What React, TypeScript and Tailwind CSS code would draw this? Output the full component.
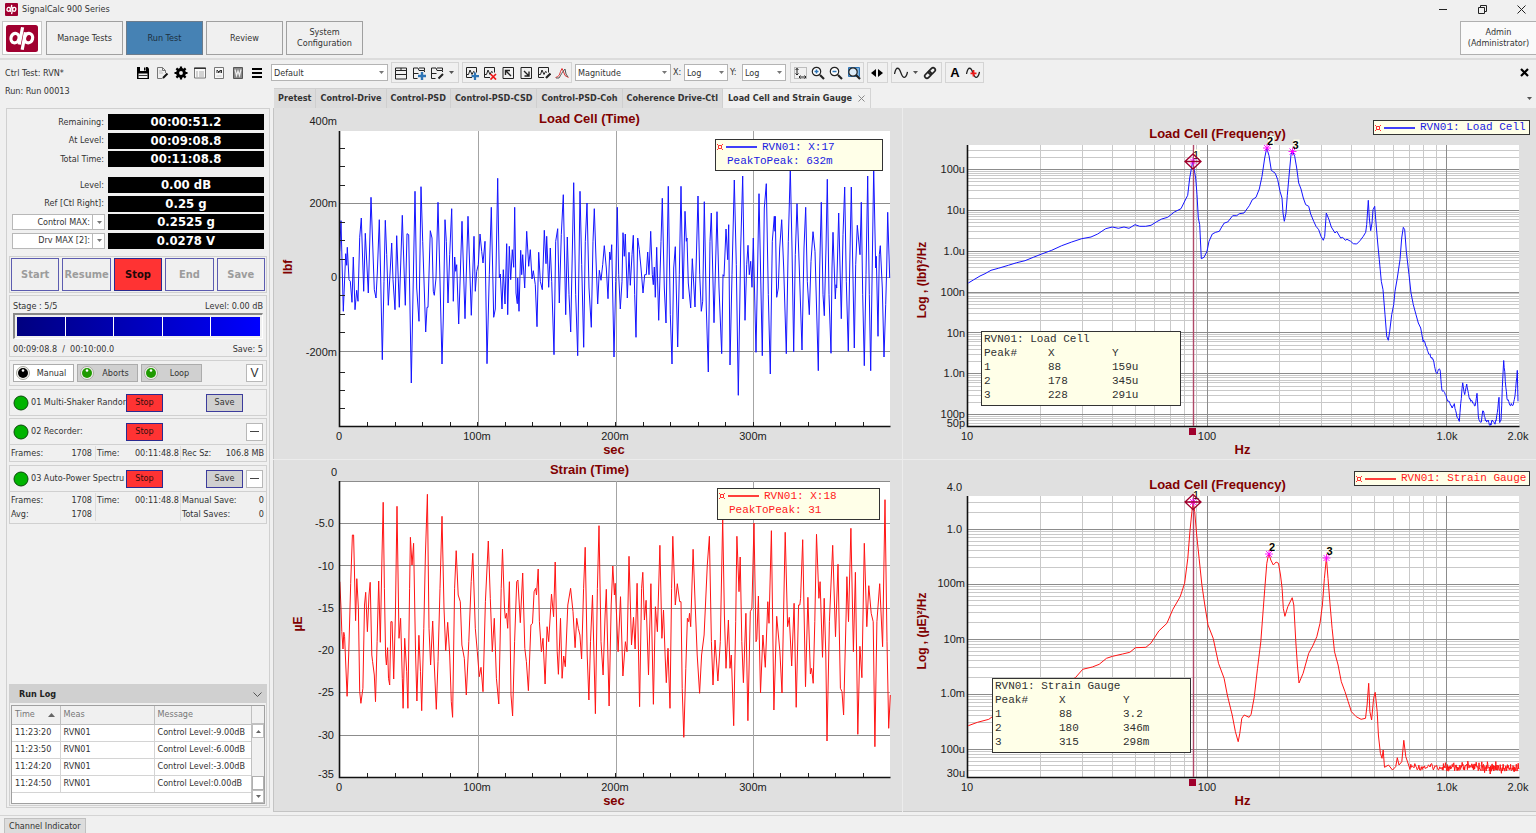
import type { ReactNode } from 'react';

type Pt = [number, number];

const LOAD_TIME_A =
  '209,430 213,338 220,610 227,437 230,472 232,418 237,515 241,520 246,583 250,447 255,605 260,547 264,580 269,388 274,330 281,550 286,376 295,555 303,268 308,408 313,545 318,570 322,495 328,335 332,510 337,755 342,520 346,337 350,440 355,592 365,405 369,515 375,605 380,383 388,598 397,322 402,480 406,592 411,377 416,380 424,825 435,250 440,540 447,640 453,236 458,400 467,672 471,598 474,598 481,368 486,390 490,550 493,562 498,510 504,283 509,480 516,768 520,630 525,335 529,400 534,585 539,440 545,302 550,580 554,447 557,490 560,470 566,648 576,340 585,632 594,325 604,622 612,385 616,550 620,490 625,470 630,378 635,430 639,465 645,400 651,767 658,500 664,298 671,628 676,603 683,211 688,510 691,498 696,603 700,485 705,588 710,407 713,620 718,415 722,515 727,425 731,478 734,298 738,555 742,587 743,510 747,610 752,427 755,500 758,440 764,540 770,370 776,475 781,425 786,513 790,488 796,530 801,656 806,433 811,520 817,545 823,367 828,467 830,385 836,538 841,420 845,520 852,740 857,400 863,362 868,585 874,380 880,260 887,620 892,387 897,560 902,672 911,224 917,560 923,743 930,250 935,470 941,718 946,400 951,285';
const LOAD_TIME_B =
  '12,540 19,658 24,400 28,302 34,480 38,588 43,487 48,517 53,470 58,413 64,480 69,572 74,432 77,455 80,410 84,600 87,747 92,520 97,298 101,500 106,603 111,520 114,374 118,445 121,378 127,570 132,433 136,532 141,440 145,382 149,560 153,688 158,390 163,425 168,480 174,555 179,500 184,500 188,432 192,500 197,370 202,500 205,530 208,477 211,568 215,418 221,637 228,400 232,271 238,540 243,645 250,235 256,620 261,768 266,480 271,416 278,717 283,500 288,235 294,573 300,310 304,400 306,390 310,525 317,600 322,452 330,597 339,264 344,500 349,610 353,580 358,281 364,600 370,792 375,400 379,315 387,644 396,311 402,540 410,737 414,500 417,505 423,363 428,455 431,350 435,771 441,500 448,216 454,470 460,862 467,420 473,204 480,637 485,470 489,412 493,500 497,460 501,538 505,390 513,733 522,257 532,743 538,300 544,227 550,560 556,798 562,400 568,325 570,370 571,325 575,568 580,540 584,420 590,335 596,480 604,737 610,400 616,180 621,420 626,731 631,440 636,287 643,480 651,726 657,420 662,298 667,520 673,620 678,460 684,371 690,430 700,788 704,480 709,283 714,560 718,623 723,420 727,214 732,560 738,736 741,480 744,373 751,573 753,530 755,540 761,315 769,632 774,380 779,237 784,520 790,730 794,480 799,237 808,720 812,470 817,352 825,440 829,283 833,560 838,773 843,500 848,204 853,560 857,788 866,180 872,480 874,445 879,685 883,440 886,413 892,540 897,747 902,590 905,480 908,313 914,510';
const STRAIN_TIME =
  '172,380 175,460 177,530 180,582 182,532 184,545 190,724 194,600 199,385 203,240 206,240 211,497 214,371 218,460 221,710 224,745 229,700 233,450 236,412 240,530 244,420 247,382 251,600 253,620 257,660 260,740 264,560 268,378 272,562 276,300 279,142 282,400 285,600 287,630 290,578 292,670 295,690 298,500 301,500 305,672 309,480 313,154 318,550 322,490 326,670 328,760 332,550 337,650 340,760 344,400 346,247 350,330 354,265 359,600 362,738 367,541 371,650 374,767 379,520 383,300 388,118 392,520 396,630 401,498 405,630 410,763 414,620 419,400 424,184 429,460 433,587 438,502 443,600 447,740 450,787 455,400 459,287 464,420 469,440 473,570 479,610 484,720 490,560 496,380 500,295 506,520 511,590 516,665 520,637 525,710 531,440 538,258 543,430 548,590 553,490 558,670 564,747 570,400 573,282 578,460 580,490 583,475 586,520 590,380 594,720 598,783 603,560 608,380 611,375 617,503 623,354 628,580 632,620 637,707 643,510 647,505 651,410 655,400 657,420 661,342 664,500 669,590 673,550 678,687 683,515 687,560 694,417 699,485 703,321 708,590 711,658 716,490 720,670 724,603 728,635 734,450 741,400 747,470 752,578 756,490 760,520 764,540 768,612 773,400 777,277 782,600 786,735 790,560 795,420 802,776 807,400 811,212 816,560 821,660 826,480 829,403 836,753 841,450 845,333 849,420 851,385 858,590 864,425 870,663 876,560 880,590 885,304 891,570 896,487 900,582 905,385 911,755 916,400 919,352 923,495 927,436 933,660 939,386 945,748 950,455 955,530 961,271 966,550 970,465 974,600 977,683 981,580 986,760 990,400 993,244 999,450 1004,386 1010,440 1013,440 1016,700 1020,847 1025,640 1029,490 1032,500 1034,475 1037,515 1043,283 1048,450 1053,600 1059,715 1064,600 1070,540 1078,330 1083,244 1088,560 1092,690 1097,555 1104,678 1110,560 1116,190 1120,480 1124,640 1130,495 1134,640 1137,600 1143,812 1148,500 1151,244 1156,410 1159,306 1163,560 1167,683 1173,475 1178,797 1184,470 1188,460 1193,204 1198,560 1200,553 1204,423 1209,714 1215,540 1221,637 1227,440 1230,505 1236,227 1242,765 1249,484 1257,590 1262,714 1270,232 1276,515 1280,487 1286,633 1292,445 1297,757 1303,450 1306,450 1308,430 1313,254 1320,695 1326,427 1332,657 1335,640 1339,685 1343,500 1347,238 1353,430 1356,380 1362,607 1366,430 1370,600 1373,858 1379,500 1387,271 1394,545 1400,328 1406,700 1410,710 1414,780 1420,480 1422,365 1426,500 1432,220 1438,590 1443,352 1449,838 1454,574 1459,668 1465,265 1471,515 1476,392 1482,475 1487,500 1491,875 1496,500 1503,386 1510,575 1516,134 1521,560 1525,820 1529,720';
const LOAD_FREQ_A =
  '190,525 205,516 225,504 240,497 258,487 280,481 310,472 335,464 360,458 385,448 410,438 440,427 470,413 500,402 530,392 558,387 578,378 602,362 622,357 640,361 657,357 672,361 690,350 704,355 722,355 738,352 755,341 770,333 788,328 808,312 828,302 838,282 848,262 854,210 863,160 872,210 876,260 880,330 884,350 889,452 897,448 906,430 912,400 922,378 932,373 943,370 950,357 958,345';
const LOAD_FREQ_B =
  '23,342 38,323 50,323 58,317 72,315 88,293 97,275 108,268 118,243 126,205 134,150 140,120 147,143 154,187 166,196 173,215 180,250 186,270 189,315 193,340 198,315 202,262 208,195 213,140 217,128 224,145 230,180 236,225 243,243 250,270 257,290 266,295 272,318 281,340 288,355 296,365 303,385 310,397 314,385 319,315 327,335 334,357 345,375 350,370 362,390 368,388 376,397 381,394 392,400 400,407 410,408 420,398 430,385 437,373 440,350 445,277 448,330 452,368 456,345 459,305 464,295 468,345 473,405 478,455 484,520 489,545 495,620 500,685 505,697 509,670 515,620 521,590 525,550 532,510 540,455 545,390 550,358 554,365 559,430 567,500 573,555 580,590 588,620 595,645 602,660 609,698';
const LOAD_FREQ_TAIL =
  '609,698 614,702 622,728 630,740 640,755 647,790 651,800 655,785 661,790 666,850 674,850 682,875 690,885 697,903 703,890 711,925 718,943 722,890 728,828 734,862 740,830 747,870 754,880 760,885 765,900 771,857 775,920 778,942 784,940 788,905 793,925 800,945 803,932 808,948 813,950 817,940 825,945 830,925 837,872 839,942 843,940 847,840 851,755 856,820 861,870 870,890 878,890 883,875 887,845 892,787 894,880';
const STRAIN_FREQ =
  '157,812 180,802 208,793 217,785 423,668 441,643 465,636 482,628 500,610 515,604 540,597 558,592 572,578 598,577 610,565 630,528 650,505 665,463 683,425 694,385 702,310 707,230 712,170 715,142 719,170 724,240 730,310 737,390 744,450 752,510 765,550 778,625 792,670 800,720 812,780 820,830 827,860 831,835 836,790 842,780 854,787 859,778 867,725 875,640 883,560 888,480 893,400 898,325 903,295 908,315 914,330 921,321 927,325 932,360 936,400 939,460 943,484 950,455 961,428 965,450 970,560 974,630 978,684 988,655 1002,595 1012,573 1022,545 1030,505 1036,450 1041,370 1046,308 1050,370 1055,450 1060,520 1066,590 1075,630 1083,680 1092,710 1100,740 1108,770 1120,785 1132,793 1143,790 1147,750 1151,685 1154,770 1158,795 1163,730 1167,712 1172,770 1175,840 1180,895 1184,910 1187,885 1190,937 1200,930 1210,945 1218,935 1222,908 1226,930 1233,920 1238,856 1243,905 1250,930';

function project(raw: string, ox: number, sx: number, oy: number, sy: number): Pt[] {
  return raw.split(' ').map((p) => {
    const [x, y] = p.split(',').map(Number);
    return [x / sx + ox, y / sy + oy];
  });
}

function noise(i: number) {
  const v = Math.sin(i * 12.9898) * 43758.5453;
  return (v - Math.floor(v)) * 2 - 1;
}

function roughen(points: Pt[], step: number, amount: number): Pt[] {
  const out: Pt[] = [];
  let k = 0;
  for (let i = 0; i < points.length - 1; i++) {
    const [x0, y0] = points[i];
    const [x1, y1] = points[i + 1];
    const n = Math.max(1, Math.round((x1 - x0) / step));
    for (let j = 0; j < n; j++) {
      const t = j / n;
      k += 1;
      const spike = k % 7 === 0 ? 1.7 : 1;
      out.push([x0 + (x1 - x0) * t, y0 + (y1 - y0) * t + noise(k) * amount * spike]);
    }
  }
  out.push(points[points.length - 1]);
  return out;
}

const loadTime = [...project(LOAD_TIME_A, -3, 3, 0, 3), ...project(LOAD_TIME_B, 312, 3, 0, 3)];
const strainTime = project(STRAIN_TIME, -3, 2.465, -4, 3);
const loadFreq = [
  ...project(LOAD_FREQ_A, 2, 3, 0, 3),
  ...project(LOAD_FREQ_B, 317, 3, 0, 3),
  ...roughen(project(LOAD_FREQ_TAIL, 317, 3, 0, 3), 0.6, 1.4),
];
const calmFloor: Pt[] = [[507, 308], [540, 308]];
const noisyFloor: Pt[] = [[540, 308], [616, 309]];
const strainFreq = [
  ...project(STRAIN_FREQ, 2, 2.482, -4, 3),
  ...roughen(calmFloor, 0.8, 3),
  ...roughen(noisyFloor, 0.4, 3.8),
];

/* ---------- charts ---------- */

const snap = (v: number) => Math.floor(v) + 0.5;

function Trace({ points, color }: { points: Pt[]; color: string }) {
  return (
    <polyline
      points={points.map(([x, y]) => `${x.toFixed(1)},${y.toFixed(1)}`).join(' ')}
      fill="none"
      stroke={color}
      strokeWidth={1}
    />
  );
}

type Label = { at: number; text: string; x?: number };

function AxisText({ x, y, anchor, children }: { x: number; y: number; anchor: 'start' | 'middle' | 'end'; children: ReactNode }) {
  return (
    <text x={x} y={y} textAnchor={anchor} fontSize={11} fill="#202020">
      {children}
    </text>
  );
}

function Heading({ x, y, children }: { x: number; y: number; children: ReactNode }) {
  return (
    <text x={x} y={y} textAnchor="middle" fontSize={13} fontWeight={700} fill="#800000">
      {children}
    </text>
  );
}

function SideTitle({ x, y, size = 12, children }: { x: number; y: number; size?: number; children: ReactNode }) {
  return (
    <text transform={`translate(${x} ${y}) rotate(-90)`} textAnchor="middle" fontSize={size} fontWeight={700} fill="#800000">
      {children}
    </text>
  );
}

const svgClass = "block w-full font-['Liberation_Sans',Arial,sans-serif]";

type TimeProps = {
  title: string;
  unit: string;
  unitX: number;
  unitY: number;
  height: number;
  titleY: number;
  top: number;
  lines: number[];
  ticks: number[];
  labels: Label[];
  points: Pt[];
  color: string;
};

function TimeChart(p: TimeProps) {
  const left = 67;
  const right = 617;
  const bottom = 318;
  const xs = Array.from({ length: 19 }, (_, i) => left + (i + 1) * 27.55);
  return (
    <svg viewBox={`0 0 630 ${p.height}`} className={svgClass} role="img" aria-label={p.title}>
      <rect x={left} y={p.top} width={right - left} height={bottom - p.top} fill="#fff" />
      {p.lines.map((y) => (
        <line key={y} x1={left} x2={right} y1={snap(y)} y2={snap(y)} stroke="#8c8c8c" />
      ))}
      {[205, 343, 480].map((x) => (
        <line key={x} x1={x + 0.5} x2={x + 0.5} y1={p.top} y2={bottom} stroke="#a4a4a4" />
      ))}
      <Trace points={p.points} color={p.color} />
      {p.ticks.map((y) => (
        <line key={y} x1={left} x2={left + 5} y1={snap(y)} y2={snap(y)} stroke="#222" />
      ))}
      {xs.map((x) => (
        <line key={x} x1={snap(x)} x2={snap(x)} y1={bottom - 4} y2={bottom} stroke="#222" />
      ))}
      <path d={`M${left - 0.5} ${p.top}V${bottom + 0.5}H${right + 0.5}`} fill="none" stroke="#111" strokeWidth={1.6} />
      <Heading x={316.5} y={p.titleY}>{p.title}</Heading>
      {p.labels.map((l) => (
        <AxisText key={l.text} x={l.x ?? 64} y={l.at + 4} anchor="end">{l.text}</AxisText>
      ))}
      <AxisText x={66} y={332} anchor="middle">0</AxisText>
      <AxisText x={204} y={332} anchor="middle">100m</AxisText>
      <AxisText x={342} y={332} anchor="middle">200m</AxisText>
      <AxisText x={480} y={332} anchor="middle">300m</AxisText>
      <Heading x={341} y={346}>sec</Heading>
      <SideTitle x={p.unitX} y={p.unitY}>{p.unit}</SideTitle>
    </svg>
  );
}

type Peak = { n: number; x: number; y: number };

type FreqProps = {
  title: string;
  unit: string;
  height: number;
  titleY: number;
  first: number;
  decade: number;
  labels: Label[];
  points: Pt[];
  color: string;
  peaks: Peak[];
};

function FreqChart(p: FreqProps) {
  const left = 65;
  const right = 616;
  const top = 37;
  const bottom = 318;
  const minorX: number[] = [];
  for (let d = 0; d < 3; d++) {
    for (let m = 2; m < 10; m++) {
      const x = left + 239.5 * (d + Math.log10(m));
      if (x <= right) minorX.push(x);
    }
  }
  const majorY: number[] = [];
  const minorY: number[] = [];
  for (let d = -1; d < 8; d++) {
    const base = p.first + d * p.decade;
    if (base > top && base < bottom) majorY.push(base);
    for (let m = 2; m < 10; m++) {
      const y = base - p.decade * Math.log10(m);
      if (y > top && y < bottom) minorY.push(y);
    }
  }
  const cursor = p.peaks[0];
  return (
    <svg viewBox={`0 0 633 ${p.height}`} className={svgClass} role="img" aria-label={`${p.title} ${p.unit}`}>
      <rect x={left} y={top} width={right - left} height={bottom - top} fill="#fff" />
      {minorX.map((x) => (
        <line key={x} x1={snap(x)} x2={snap(x)} y1={top} y2={bottom} stroke="#c9c9c9" />
      ))}
      {minorY.map((y) => (
        <line key={y} x1={left} x2={right} y1={snap(y)} y2={snap(y)} stroke="#c9c9c9" />
      ))}
      {majorY.map((y) => (
        <line key={y} x1={left} x2={right} y1={snap(y)} y2={snap(y)} stroke="#8c8c8c" />
      ))}
      {[304.5, 543.5].map((x) => (
        <line key={x} x1={x} x2={x} y1={top} y2={bottom} stroke="#8c8c8c" />
      ))}
      <path d={`M${left - 0.5} ${top}V${bottom + 0.5}H${right + 0.5}`} fill="none" stroke="#111" strokeWidth={1.6} />
      <Heading x={314.5} y={p.titleY}>{p.title}</Heading>
      <Trace points={p.points} color={p.color} />
      <line x1={snap(cursor.x)} x2={snap(cursor.x)} y1={top} y2={bottom} stroke="#b04868" strokeWidth={1.4} />
      <rect x={cursor.x - 4} y={320} width={7} height={7} fill="#a0002c" />
      {p.peaks.map((k) => (
        <g key={k.n}>
          <rect x={k.x + 1} y={k.y - 12} width={6} height={9} fill="#ffffe8" />
          <text x={k.x} y={k.y - 3} fontSize={11} fontWeight={k.n === 1 ? 400 : 700} fill="#000">{k.n}</text>
          <path
            d={`M${k.x - 4} ${k.y}h8M${k.x} ${k.y - 4}v8M${k.x - 3} ${k.y - 3}l6 6M${k.x + 3} ${k.y - 3}l-6 6`}
            stroke="#ff00ff"
            strokeWidth={0.9}
          />
        </g>
      ))}
      <path
        d={`M${cursor.x - 8} ${cursor.y}l8 -7.5l8 7.5l-8 7.5zM${cursor.x - 8} ${cursor.y}h16`}
        fill="none"
        stroke="#a0002c"
        strokeWidth={1.3}
      />
      {p.labels.map((l) => (
        <AxisText key={l.text} x={l.x ?? 62} y={l.at + 4} anchor="end">{l.text}</AxisText>
      ))}
      <AxisText x={64} y={332} anchor="middle">10</AxisText>
      <AxisText x={304} y={332} anchor="middle">100</AxisText>
      <AxisText x={544} y={332} anchor="middle">1.0k</AxisText>
      <AxisText x={615} y={332} anchor="middle">2.0k</AxisText>
      <Heading x={339.5} y={346}>Hz</Heading>
      <SideTitle x={23} y={172}>{p.unit}</SideTitle>
    </svg>
  );
}

function Swatch({ color }: { color: string }) {
  return (
    <svg width="40" height="8" viewBox="0 0 40 8" className="shrink-0" aria-hidden="true">
      <path d="M1.500 2.500h3v3h-3zM0 1l1.500 1.500M6 1L4.500 2.500M0 7l1.500-1.500M6 7L4.500 5.500" stroke="#ff3030" fill="none" />
      <path d="M9 4h31" stroke={color} strokeWidth="1.500" />
    </svg>
  );
}

const mono = "font-['Liberation_Mono','Courier_New',monospace] text-[11px]";

function PeakTable({ title, rows }: { title: string; rows: [string, string, string][] }) {
  return (
    <table className={`${mono} w-full table-fixed text-left leading-[14px] text-[#303030]`}>
      <caption className="h-[14px] text-left whitespace-nowrap">{title}</caption>
      <thead>
        <tr>
          <th className="w-[64px] p-0 font-normal">Peak#</th>
          <th className="w-[64px] p-0 font-normal">X</th>
          <th className="p-0 font-normal">Y</th>
        </tr>
      </thead>
      <tbody>
        {rows.map((r) => (
          <tr key={r[0]}>
            {r.map((c) => (
              <td key={c} className="p-0">{c}</td>
            ))}
          </tr>
        ))}
      </tbody>
    </table>
  );
}

/* ---------- icons ---------- */

function Icon({ children, size = 14 }: { children: ReactNode; size?: number }) {
  return (
    <svg width={size} height={size} viewBox="0 0 14 14" fill="none" stroke="#222" strokeWidth={1} aria-hidden="true">
      {children}
    </svg>
  );
}

function DpMark({ width, height, crop }: { width: number; height: number; crop: number }) {
  return (
    <svg width={width} height={height} viewBox={`0 ${crop} 32 ${32 - 2 * crop}`} aria-hidden="true" className="shrink-0">
      <rect y={crop} width="32" height={32 - 2 * crop} rx="2.500" fill="#a00030" />
      <g fill="none" stroke="#fff" strokeWidth="3.200">
        <ellipse cx="9" cy="15.600" rx="4" ry="4.800" transform="rotate(14 9 15.600)" />
        <path d="M16.600 4.800L13.200 22" />
        <ellipse cx="22.600" cy="15.600" rx="4" ry="4.800" transform="rotate(14 22.600 15.600)" />
        <path d="M19.400 9.800L16.200 27.200" />
      </g>
    </svg>
  );
}

const sideTools: { name: string; icon: ReactNode }[] = [
  {
    name: 'Save test',
    icon: (
      <Icon>
        <path d="M1 1h10.500L13 2.500V13H1z" fill="#000" stroke="none" />
        <path d="M4 1h6v4H4zM2.500 7.500h9V12h-9z" fill="#f0f0f0" stroke="none" />
        <path d="M8 1.500h1.500v3H8zM2.500 9h9v.8h-9z" fill="#000" stroke="none" />
      </Icon>
    ),
  },
  {
    name: 'Edit test',
    icon: (
      <Icon>
        <path d="M2.500 1.500h5l3 3V7M2.500 1.500v11h5M7.500 1.500v3h3" stroke="#777" />
        <path d="M4 5h3M4 7h4" stroke="#bbb" />
        <path d="M12.500 7.500L8 12" stroke="#111" strokeWidth="2" />
      </Icon>
    ),
  },
  {
    name: 'Settings',
    icon: (
      <Icon>
        <circle cx="7" cy="7" r="3.400" stroke="#000" strokeWidth="3" />
        <path d="M7 .5v3M7 10.500v3M.5 7h3M10.500 7h3M2.400 2.400l2 2M9.600 9.600l2 2M11.600 2.400l-2 2M4.400 9.600l-2 2" stroke="#000" strokeWidth="2.200" />
      </Icon>
    ),
  },
  {
    name: 'Window',
    icon: (
      <Icon>
        <path d="M1.500 1.500h11v10.500h-11z" fill="#fafafa" stroke="#777" />
        <path d="M1 2.500h12" stroke="#333" />
        <path d="M3 6h2M6 6h5M3 8h2M6 8h5M3 10h2M6 10h5" stroke="#aaa" />
      </Icon>
    ),
  },
  {
    name: 'Report',
    icon: (
      <Icon>
        <path d="M2.500 1.500h9v11h-9z" fill="#f6f6f6" stroke="#777" />
        <path d="M5 4v3M6.500 5v2M8 4v3M9.500 4v3M5 4l2 2 2-2" stroke="#333" />
        <path d="M4.500 10h5" stroke="#ccc" />
      </Icon>
    ),
  },
  {
    name: 'Word report',
    icon: (
      <Icon>
        <path d="M2.500 1.500h9v11h-9z" fill="#888" stroke="#555" />
        <path d="M4 3.500l1.500 6L7 5l1.500 4.500 1.500-6" stroke="#eee" strokeWidth="1.200" />
      </Icon>
    ),
  },
  {
    name: 'Menu',
    icon: (
      <Icon>
        <path d="M2 3h10M2 7h10M2 11h10" stroke="#000" strokeWidth="2" />
      </Icon>
    ),
  },
];

const folderPath = 'M1.500 4.500v-2.500h11v11h-11zM1.500 4.500h11M1.500 8.500h11M7 2v2.500';
const folderOpen = 'M5.500 12.500h-4v-10.500h4.500l1 2.500h5.500V6M7 2h5.500v2M1.500 7.500h5';

function IconButton({ label, children, className = 'w-[18px]' }: { label: string; children: ReactNode; className?: string }) {
  return (
    <button type="button" aria-label={label} className={`flex h-full shrink-0 items-center justify-center ${className}`}>
      {children}
    </button>
  );
}

function Caret({ color = '#777' }: { color?: string }) {
  return (
    <svg width="5" height="3" viewBox="0 0 5 3" aria-hidden="true" className="shrink-0">
      <path d="M0 0h5L2.500 3z" fill={color} />
    </svg>
  );
}

function ToolGroup({ children, className }: { children: ReactNode; className: string }) {
  return <div className={`flex h-[21px] shrink-0 items-center border border-[#d4d4d4] ${className}`}>{children}</div>;
}

function Combo({ label, options, className }: { label: string; options: string[]; className: string }) {
  return (
    <span className={`relative inline-block shrink-0 ${className}`}>
      <select aria-label={label} className="block h-[17px] w-full appearance-none rounded-none border border-[#b4b4b4] bg-white pl-[2px] leading-[14px] text-[#333]">
        {options.map((o) => (
          <option key={o}>{o}</option>
        ))}
      </select>
      <span className="pointer-events-none absolute inset-y-0 right-[4px] flex items-center">
        <Caret />
      </span>
    </span>
  );
}

const waveBox = 'M7 11.500H1.500V1.500h10V6.500M2 8.500h1.500L5 4l2 4.500 1.500-3 1.500 1';

function Toolbar() {
  return (
    <div className="flex h-[25px] items-center">
      <Combo label="Layout" options={['Default']} className="w-[117px]" />
      <ToolGroup className="ml-[3px] w-[68px]">
        <IconButton label="Panes"><Icon><path d={folderPath} /></Icon></IconButton>
        <IconButton label="Add panes">
          <Icon><path d={folderOpen} /><path d="M10 6v8M6 10h8" stroke="#2e75b6" strokeWidth="2.400" /></Icon>
        </IconButton>
        <IconButton label="Edit panes">
          <Icon><path d={folderOpen} /><path d="M13 8l-4.500 4.500" strokeWidth="2" /></Icon>
        </IconButton>
        <IconButton label="More panes" className="w-[10px]"><Caret color="#555" /></IconButton>
      </ToolGroup>
      <ToolGroup className="ml-[3px] w-[110px]">
        <IconButton label="Add trace">
          <Icon><path d={waveBox} /><path d="M10 6.500v7.500M6.500 10.200h7.500" stroke="#2e75b6" strokeWidth="2.200" /></Icon>
        </IconButton>
        <IconButton label="Delete trace">
          <Icon><path d={waveBox} /><path d="M7.500 8l5.500 5.500M13 8l-5.500 5.500" stroke="#f01818" strokeWidth="1.700" /></Icon>
        </IconButton>
        <IconButton label="Expand">
          <Icon><path d="M2 1.500h10.500v11H2z" /><path d="M10 10L5 5M4.500 9V4.500H9" strokeWidth="1.400" /></Icon>
        </IconButton>
        <IconButton label="Collapse">
          <Icon><path d="M2 1.500h10.500v11H2z" /><path d="M5 5l5 5M10 5.500V10H5.500" strokeWidth="1.400" /></Icon>
        </IconButton>
        <IconButton label="Edit trace">
          <Icon><path d={waveBox} /><path d="M13.500 7.500l-4.500 4.500" strokeWidth="2.200" /></Icon>
        </IconButton>
        <IconButton label="Overlay traces">
          <Icon><path d="M.5 11.500c3-1 4-2 5-6l1.500-3 1 2 2 5 3.500 2" stroke="#e03030" /><path d="M1 12h3c2-3 3-6 6-9l1 5 2 3" stroke="#555" /></Icon>
        </IconButton>
      </ToolGroup>
      <Combo label="Format" options={['Magnitude']} className="ml-[3px] w-[96px]" />
      <label className="ml-[2px] flex items-center">
        <span className="w-[11px]">X:</span>
        <Combo label="X scale" options={['Log', 'Linear']} className="w-[44px]" />
      </label>
      <label className="ml-[2px] flex items-center">
        <span className="w-[12px]">Y:</span>
        <Combo label="Y scale" options={['Log', 'Linear']} className="w-[44px]" />
      </label>
      <ToolGroup className="ml-[4px] w-[74px]">
        <IconButton label="Axis limits">
          <Icon><path d="M1.500 1.500h12v11h-12z" stroke="#888" strokeDasharray="1 1" /><path d="M4 2v7M2.500 4L4 2.500 5.500 4M2.500 7.500L4 9l1.500-1.500M6 11h7M7.500 9.500L6 11l1.500 1.500M11.500 9.500L13 11l-1.500 1.500" /></Icon>
        </IconButton>
        {['M3.500 5.500h4M5.500 3.500v4', 'M3.500 5.500h4'].map((d, i) => (
          <IconButton key={d} label={i ? 'Zoom out' : 'Zoom in'}>
            <Icon><circle cx="5.500" cy="5.500" r="4.200" strokeWidth="1.200" fill="#fff" /><path d="M9 9l4 4" strokeWidth="2.200" /><path d={d} stroke="#2e75b6" strokeWidth="1.500" /></Icon>
          </IconButton>
        ))}
        <IconButton label="Zoom to fit">
          <Icon><path d="M1.500 1.500h11v9h-11z" fill="#7fb2de" stroke="#2e75b6" /><circle cx="6" cy="6" r="4.200" strokeWidth="1.200" fill="#dcebf7" /><path d="M9 9l4 4" strokeWidth="2.200" /></Icon>
        </IconButton>
      </ToolGroup>
      <ToolGroup className="ml-[3px] w-[21px]">
        <IconButton label="Cursor">
          <Icon><path d="M6 3v8L1 7zM8 3v8l5-4z" fill="#000" stroke="none" /></Icon>
        </IconButton>
      </ToolGroup>
      <ToolGroup className="ml-[3px] w-[51px]">
        <IconButton label="Wave"><Icon><path d="M.5 8C2 0 5 1 7 7s5 6 6.500-1" strokeWidth="1.300" /></Icon></IconButton>
        <IconButton label="More waves" className="w-[11px]"><Caret color="#555" /></IconButton>
        <IconButton label="Link">
          <Icon><g transform="rotate(-45 7 7)" strokeWidth="1.700"><rect x="0.500" y="4.800" width="7.500" height="4.400" rx="2.200" /><rect x="6" y="4.800" width="7.500" height="4.400" rx="2.200" /></g></Icon>
        </IconButton>
      </ToolGroup>
      <ToolGroup className="ml-[3px] w-[39px]">
        <IconButton label="Annotate">
          <span className="font-['Liberation_Sans',Arial,sans-serif] text-[13px] leading-[14px] font-bold text-black">A</span>
        </IconButton>
        <IconButton label="Mark trace">
          <Icon><path d="M.5 8C2 0 5 1 7 7s5 6 6.500-1" strokeWidth="1.300" /><path d="M7.500 4v6.500M4.500 7.300h6" stroke="#f01818" strokeWidth="1.800" /></Icon>
        </IconButton>
      </ToolGroup>
      <button type="button" aria-label="Close panel" className="mr-[7px] ml-auto">
        <svg width="9" height="9" viewBox="0 0 9 9" aria-hidden="true">
          <path d="M1 1l7 7M8 1L1 8" stroke="#000" strokeWidth="2.200" />
        </svg>
      </button>
    </div>
  );
}

/* ---------- side panel ---------- */

function Readout({ label, value }: { label: ReactNode; value: string }) {
  return (
    <div className="flex h-[16px] items-center">
      <div className="w-[97px] shrink-0 pr-[4px] text-right">{label}</div>
      <output className="h-[16px] flex-1 bg-black text-center text-[13px] leading-[16px] font-bold text-white">{value}</output>
    </div>
  );
}

function PickLabel({ text }: { text: string }) {
  return (
    <span className="relative -mr-[1px] ml-[1px] block">
      <select aria-label={text} className="block h-[16px] w-full appearance-none rounded-none border border-[#b8b8b8] bg-white pr-[14px] text-right leading-[13px] text-[#333] [text-align-last:right]">
        <option>{text}</option>
      </select>
      <span className="pointer-events-none absolute inset-y-0 right-0 flex w-[13px] items-center justify-center border-l border-[#b8b8b8]">
        <Caret />
      </span>
    </span>
  );
}

function Box({ children, className = '' }: { children: ReactNode; className?: string }) {
  return <section className={`border border-[#d0d0d0] ${className}`}>{children}</section>;
}

function Lamp({ color }: { color: string }) {
  return (
    <svg width="14" height="14" viewBox="0 0 14 14" aria-hidden="true" className="shrink-0">
      <circle cx="7" cy="7" r="6.500" fill="#f4f4f0" stroke="#a8a8a0" />
      <circle cx="7" cy="7" r="5" fill={color} />
      <circle cx="7" cy="4.500" r="1.300" fill="#fff" />
    </svg>
  );
}

function ModeButton({ text, lamp, on }: { text: string; lamp: string; on?: boolean }) {
  return (
    <button
      type="button"
      aria-pressed={!!on}
      className={`flex h-[18px] w-[61px] items-center border border-[#acacac] pl-[2px] ${on ? 'bg-white' : 'bg-[#d0d0d0]'}`}
    >
      <Lamp color={lamp} />
      <span className="flex-1 text-center">{text}</span>
    </button>
  );
}

function MeasHead({ name, save, fold }: { name: string; save?: boolean; fold?: boolean }) {
  return (
    <div className="flex h-[25px] items-center pr-[3px] pl-[3px]">
      <svg width="16" height="16" viewBox="0 0 16 16" aria-hidden="true" className="shrink-0">
        <circle cx="8" cy="8" r="7" fill="#00b400" stroke="#0a4a0a" />
      </svg>
      <span className="ml-[2px] w-[95px] shrink-0 whitespace-nowrap">{name}</span>
      <button type="button" className="h-[18px] w-[37px] shrink-0 border border-[#2a2a90] bg-[#ff3333] text-[#301010]">Stop</button>
      {save && (
        <button type="button" className="ml-[43px] h-[18px] w-[37px] shrink-0 border border-[#3c3c9c] bg-[#d0d0d0]">Save</button>
      )}
      {fold && (
        <button type="button" aria-label={`Collapse ${name}`} className="ml-auto flex h-[18px] w-[17px] items-center justify-center border border-[#b8b8b8] bg-white">
          <span className="h-px w-[9px] bg-[#444]" />
        </button>
      )}
    </div>
  );
}

function Stat({ name, value, className }: { name: string; value: string; className: string }) {
  return (
    <div className={`flex justify-between whitespace-nowrap ${className}`}>
      <span>{name}</span>
      <span>{value}</span>
    </div>
  );
}

const log: [string, string, string][] = [
  ['11:23:20', 'RVN01', 'Control Level:-9.00dB'],
  ['11:23:50', 'RVN01', 'Control Level:-6.00dB'],
  ['11:24:20', 'RVN01', 'Control Level:-3.00dB'],
  ['11:24:50', 'RVN01', 'Control Level:0.00dB'],
];

function RunLog() {
  return (
    <Box className="mt-auto bg-[#f0f0f0]">
      <button type="button" className="flex h-[18px] w-full items-center justify-between bg-[#d0d0d0] pr-[4px] pl-[9px] font-bold text-[#222]">
        Run Log
        <svg width="9" height="5" viewBox="0 0 9 5" fill="none" aria-hidden="true">
          <path d="M.5 .5l4 4 4-4" stroke="#555" />
        </svg>
      </button>
      <div className="m-px mt-[2px] flex h-[99px] border border-[#a0a0a0] bg-white">
        <table className="h-fit flex-1 table-fixed border-collapse text-left">
          <thead>
            <tr className="h-[18px] bg-[#f0f0f0] text-[#777]">
              <th className="w-[48px] border-r border-b border-[#c0c0c0] p-0 pl-[3px] font-normal">
                <span className="flex items-center justify-between pr-[5px]">
                  Time
                  <svg width="7" height="4" viewBox="0 0 7 4" aria-hidden="true"><path d="M0 4h7L3.500 0z" fill="#666" /></svg>
                </span>
              </th>
              <th className="w-[94px] border-r border-b border-[#c0c0c0] p-0 pl-[3px] font-normal">Meas</th>
              <th className="border-b border-[#c0c0c0] p-0 pl-[3px] font-normal">Message</th>
            </tr>
          </thead>
          <tbody>
            {log.map((r) => (
              <tr key={r[0]} className="h-[17px]">
                <td className="border-r border-b border-[#d4d4d4] p-0 pl-[3px]">{r[0]}</td>
                <td className="border-r border-b border-[#d4d4d4] p-0 pl-[3px]">{r[1]}</td>
                <td className="border-b border-[#d4d4d4] p-0 pl-[3px] whitespace-nowrap">{r[2]}</td>
              </tr>
            ))}
          </tbody>
        </table>
        <div className="flex w-[13px] shrink-0 flex-col border-l border-[#c0c0c0] bg-[#f0f0f0]">
          <div className="h-[18px] border-b border-[#c0c0c0]" />
          <button type="button" aria-label="Scroll up" className="flex h-[14px] items-center justify-center border border-[#c0c0c0] bg-white">
            <svg width="5" height="3" viewBox="0 0 5 3" aria-hidden="true"><path d="M0 3h5L2.500 0z" fill="#666" /></svg>
          </button>
          <div className="mt-auto h-[14px] border border-[#b0b0b0] bg-white" />
          <button type="button" aria-label="Scroll down" className="flex h-[13px] items-center justify-center border border-[#c0c0c0] bg-white">
            <Caret color="#666" />
          </button>
        </div>
      </div>
    </Box>
  );
}

function SidePanel() {
  return (
    <aside className="flex w-[271px] shrink-0 flex-col">
      <header className="flex h-[48px] justify-between pr-[5px] pl-[5px]">
        <div className="pt-[4px] leading-[18px]">
          <p>Ctrl Test: RVN*</p>
          <p>Run: Run 00013</p>
        </div>
        <div className="flex h-[26px] gap-[1px]">
          {sideTools.map((t) => (
            <IconButton key={t.name} label={t.name}>{t.icon}</IconButton>
          ))}
        </div>
      </header>
      <div className="mr-px mb-[4px] ml-[6px] flex flex-1 flex-col border border-[#d0d0d0] px-[2px] pb-[1px]">
        <div className="mt-[5px] mr-[3px] ml-[2px] flex h-[53px] flex-col justify-between">
          <Readout label="Remaining:" value="00:00:51.2" />
          <Readout label="At Level:" value="00:09:08.8" />
          <Readout label="Total Time:" value="00:11:08.8" />
        </div>
        <div className="mt-[10px] mr-[3px] ml-[2px] flex h-[72px] flex-col justify-between">
          <Readout label="Level:" value="0.00 dB" />
          <Readout label="Ref [Ctl Right]:" value="0.25 g" />
          <Readout label={<PickLabel text="Control MAX:" />} value="0.2525 g" />
          <Readout label={<PickLabel text="Drv MAX [2]:" />} value="0.0278 V" />
        </div>

        <Box className="mt-[7px] grid grid-cols-5 gap-[3px] p-px">
          {['Start', 'Resume', 'Stop', 'End', 'Save'].map((b) => (
            <button
              key={b}
              type="button"
              className={`h-[33px] border text-[11px] font-bold ${
                b === 'Stop' ? 'border-[#2a2a90] bg-[#ff3333] text-[#200808]' : 'border-[#5c5cb0] bg-[#f0f0f0] text-[#9c9c9c]'
              }`}
            >
              {b}
            </button>
          ))}
        </Box>

        <Box className="mt-[2px] h-[62px] px-[3px]">
          <div className="flex h-[17px] items-end justify-between">
            <span>Stage : 5/5</span>
            <span>Level: 0.00 dB</span>
          </div>
          <div className="h-[26px] border-t-2 border-r border-b border-l-2 border-t-[#888] border-r-white border-b-white border-l-[#888] p-[2px]">
            <div role="progressbar" aria-label="Stage" aria-valuenow={5} aria-valuemax={5} className="grid h-[19px] grid-cols-5 divide-x divide-white bg-linear-to-r from-[#000080] to-[#0000ff]">
              <span />
              <span />
              <span />
              <span />
              <span />
            </div>
          </div>
          <div className="flex h-[17px] items-end justify-between">
            <span>00:09:08.8&nbsp; /&nbsp; 00:10:00.0</span>
            <span>Save: 5</span>
          </div>
        </Box>

        <Box className="mt-[3px] flex h-[26px] items-center gap-[3px] px-[3px]">
          <ModeButton text="Manual" lamp="#000" on />
          <ModeButton text="Aborts" lamp="#1f9a00" />
          <ModeButton text="Loop" lamp="#1f9a00" />
          <button type="button" className="ml-auto h-[18px] w-[17px] border border-[#b8b8b8] bg-white font-['Liberation_Sans',Arial,sans-serif] text-[12px] leading-[16px]">V</button>
        </Box>

        <Box className="mt-[3px]">
          <MeasHead name="01 Multi-Shaker Randor" save />
        </Box>

        <Box className="mt-[2px] h-[44px]">
          <MeasHead name="02 Recorder:" fold />
          <div className="flex h-[17px] items-center border-t border-[#d0d0d0] leading-[14px]">
            <Stat name="Frames:" value="1708" className="w-[82px] pl-px" />
            <Stat name="Time:" value="00:11:48.8" className="ml-[3px] w-[84px] border-l border-[#dcdcdc] pl-px" />
            <Stat name="Rec Sz:" value="106.8 MB" className="ml-[1px] flex-1 border-l border-[#dcdcdc] pr-[2px] pl-px" />
          </div>
        </Box>

        <Box className="mt-[3px] h-[59px]">
          <MeasHead name="03 Auto-Power Spectru" save fold />
          <div className="flex border-t border-[#d0d0d0] pt-[1px] leading-[14px]">
            <div className="w-[82px] pl-px">
              <Stat name="Frames:" value="1708" className="" />
              <Stat name="Avg:" value="1708" className="" />
            </div>
            <Stat name="Time:" value="00:11:48.8" className="ml-[3px] w-[84px] border-l border-[#dcdcdc] pl-px" />
            <div className="ml-[1px] flex-1 border-l border-[#dcdcdc] pr-[2px] pl-px">
              <Stat name="Manual Save:" value="0" className="" />
              <Stat name="Total Saves:" value="0" className="" />
            </div>
          </div>
        </Box>

        <RunLog />
      </div>
    </aside>
  );
}

/* ---------- page ---------- */

const nav = ['Manage Tests', 'Run Test', 'Review', 'System Configuration'];
const tabs = ['Pretest', 'Control-Drive', 'Control-PSD', 'Control-PSD-CSD', 'Control-PSD-Coh', 'Coherence Drive-Ctl'];
const legendBox = `${mono} absolute border border-[#333] bg-[#ffffe8]`;

export default function App() {
  return (
    <div className="flex min-h-screen flex-col bg-[#f0f0f0] font-['DejaVu_Sans_Condensed',Tahoma,sans-serif] text-[9px] leading-[13px] text-[#333]">
      <header>
        <div className="flex h-[18px] items-center pl-[5px]">
          <DpMark width={13} height={13} crop={0} />
          <h1 className="ml-[4px] text-[9px]">SignalCalc 900 Series</h1>
          <div className="ml-auto flex items-center gap-[30px] pr-[10px]">
            <button type="button" aria-label="Minimize">
              <svg width="9" height="9" viewBox="0 0 9 9" aria-hidden="true"><path d="M0 4.500h8" stroke="#222" /></svg>
            </button>
            <button type="button" aria-label="Restore">
              <svg width="9" height="9" viewBox="0 0 9 9" fill="none" stroke="#222" aria-hidden="true"><path d="M.5 2.500h6v6h-6zM2.500 2.500v-2h6v6h-2" /></svg>
            </button>
            <button type="button" aria-label="Close">
              <svg width="9" height="9" viewBox="0 0 9 9" stroke="#222" aria-hidden="true"><path d="M.5 .5l8 8M8.500 .5l-8 8" /></svg>
            </button>
          </div>
        </div>
        <nav className="flex h-[42px] gap-[3px] border-b-2 border-[#dcdcdc] pt-[3px] pl-[2px]">
          <a href="#home" aria-label="Home" className="mr-px flex h-[34px] w-[40px] items-center justify-center border border-[#c8c8c8] bg-white">
            <DpMark width={32} height={27} crop={2.5} />
          </a>
          {nav.map((n) => (
            <button
              key={n}
              type="button"
              className={`h-[34px] w-[77px] border px-[8px] leading-[11px] ${
                n === 'Run Test' ? 'border-[#6c7c8c] bg-[#4682b4] text-[#1c3040]' : 'border-[#a0a0a0] bg-[#f0f0f0]'
              }`}
            >
              {n}
            </button>
          ))}
          <button type="button" className="ml-auto h-[34px] w-[76px] border border-r-0 border-[#b0b0b0] bg-[#fafafa] leading-[11px]">
            Admin
            <br />
            (Administrator)
          </button>
        </nav>
      </header>

      <div className="flex flex-1">
        <SidePanel />
        <main className="flex min-w-0 flex-1 flex-col">
          <Toolbar />
          <div role="tablist" className="mt-[3px] flex h-[20px] items-stretch pl-[3px]">
            {tabs.map((t) => (
              <button key={t} type="button" role="tab" aria-selected={false} className="border-t border-r border-[#cfcfcf] bg-[#dcdcdc] px-[4px] font-bold whitespace-nowrap">
                {t}
              </button>
            ))}
            <button type="button" role="tab" aria-selected className="flex items-center gap-[6px] border-t border-r border-[#d4d4d4] px-[5px] font-bold whitespace-nowrap">
              Load Cell and Strain Gauge
              <svg width="7" height="7" viewBox="0 0 7 7" stroke="#888" aria-hidden="true"><path d="M.5 .5l6 6M6.500 .5l-6 6" /></svg>
            </button>
            <button type="button" aria-label="All tabs" className="mr-[4px] ml-auto"><Caret color="#555" /></button>
          </div>

          <div className="ml-[2px] grid grid-cols-[630fr_633fr] bg-[#e0e0e0] shadow-[inset_1px_-1px_0_#c4c4c4]">
            <div className="relative border-r border-[#ececec] [&>svg]:-mr-px [&>svg]:w-[calc(100%+1px)]">
              <TimeChart
                title="Load Cell (Time)"
                unit="lbf"
                unitX={19}
                unitY={159}
                height={351}
                titleY={15}
                top={23}
                lines={[95, 169, 243]}
                ticks={[40, 58, 77, 114, 132, 151, 187, 206, 224, 264, 282, 300]}
                labels={[
                  { at: 13, text: '400m' },
                  { at: 95, text: '200m' },
                  { at: 169, text: '0' },
                  { at: 244, text: '-200m' },
                ]}
                points={loadTime}
                color="#1414ff"
              />
              <div className={`${legendBox} top-[31px] right-[19px] h-[32px] w-[168px] pl-[1px] leading-[14px] text-[#2020e0]`}>
                <div className="flex items-center gap-[5px]">
                  <Swatch color="#0000ff" />
                  <span>RVN01: X:17</span>
                </div>
                <div className="pl-[10px]">PeakToPeak: 632m</div>
              </div>
            </div>

            <div className="relative">
              <FreqChart
                title="Load Cell (Frequency)"
                unit="Log , (lbf)²/Hz"
                height={351}
                titleY={30}
                first={61.5}
                decade={40.85}
                labels={[
                  { at: 61, text: '100u' },
                  { at: 102, text: '10u' },
                  { at: 143, text: '1.0u' },
                  { at: 184, text: '100n' },
                  { at: 225, text: '10n' },
                  { at: 265, text: '1.0n' },
                  { at: 306, text: '100p' },
                  { at: 315, text: '50p' },
                ]}
                points={loadFreq}
                color="#1414ff"
                peaks={[
                  { n: 1, x: 290, y: 53.5 },
                  { n: 2, x: 364, y: 40 },
                  { n: 3, x: 389.5, y: 43.5 },
                ]}
              />
              <div className={`${legendBox} top-[12px] right-[6px] flex h-[15px] w-[157px] items-center gap-[5px] pl-[1px] leading-[13px] whitespace-nowrap text-[#2020e0]`}>
                <Swatch color="#0000ff" />
                <span>RVN01: Load Cell</span>
              </div>
              <div className={`${legendBox} top-[223px] left-[78px] h-[75px] w-[200px] pl-[2px]`}>
                <PeakTable title="RVN01: Load Cell" rows={[['1', '88', '159u'], ['2', '178', '345u'], ['3', '228', '291u']]} />
              </div>
            </div>

            <div className="relative border-t border-r border-[#ececec] [&>svg]:-mt-px [&>svg]:-mr-px [&>svg]:w-[calc(100%+1px)]">
              <TimeChart
                title="Strain (Time)"
                unit="µE"
                unitX={29}
                unitY={165}
                height={353}
                titleY={15}
                top={22}
                lines={[22, 64, 106, 149, 191, 233, 276]}
                ticks={[]}
                labels={[
                  { at: 13, text: '0' },
                  { at: 64, text: '-5.0', x: 61 },
                  { at: 107, text: '-10', x: 61 },
                  { at: 149, text: '-15', x: 61 },
                  { at: 191, text: '-20', x: 61 },
                  { at: 233, text: '-25', x: 61 },
                  { at: 276, text: '-30', x: 61 },
                  { at: 315, text: '-35', x: 61 },
                ]}
                points={strainTime}
                color="#ff1414"
              />
              <div className={`${legendBox} top-[28px] right-[22px] h-[32px] w-[163px] pl-[1px] leading-[14px] text-[#ff2020]`}>
                <div className="flex items-center gap-[5px]">
                  <Swatch color="#ff0000" />
                  <span>RVN01: X:18</span>
                </div>
                <div className="pl-[10px]">PeakToPeak: 31</div>
              </div>
            </div>

            <div className="relative border-t border-[#ececec] [&>svg]:-mt-px">
              <FreqChart
                title="Load Cell (Frequency)"
                unit="Log , (µE)²/Hz"
                height={353}
                titleY={30}
                first={70}
                decade={55}
                labels={[
                  { at: 28, text: '4.0', x: 59 },
                  { at: 70, text: '1.0', x: 59 },
                  { at: 124, text: '100m' },
                  { at: 180, text: '10m' },
                  { at: 234, text: '1.0m' },
                  { at: 290, text: '100u' },
                  { at: 314, text: '30u' },
                ]}
                points={strainFreq}
                color="#ff1414"
                peaks={[
                  { n: 1, x: 290, y: 43 },
                  { n: 2, x: 366, y: 95 },
                  { n: 3, x: 423.5, y: 99 },
                ]}
              />
              <div className={`${legendBox} top-[11px] right-[6px] flex h-[15px] w-[176px] items-center gap-[5px] pl-[1px] leading-[13px] whitespace-nowrap text-[#ff2020]`}>
                <Swatch color="#ff0000" />
                <span>RVN01: Strain Gauge</span>
              </div>
              <div className={`${legendBox} top-[218px] left-[89px] h-[75px] w-[199px] pl-[2px]`}>
                <PeakTable title="RVN01: Strain Gauge" rows={[['1', '88', '3.2'], ['2', '180', '346m'], ['3', '315', '298m']]} />
              </div>
            </div>
          </div>
        </main>
      </div>

      <footer className="mt-[3px] flex h-[18px] items-end border-t border-[#d4d4d4] pl-[4px]">
        <button type="button" className="h-[15px] border border-b-0 border-[#c0c0c0] bg-[#dcdcdc] px-[4px]">Channel Indicator</button>
      </footer>
    </div>
  );
}
